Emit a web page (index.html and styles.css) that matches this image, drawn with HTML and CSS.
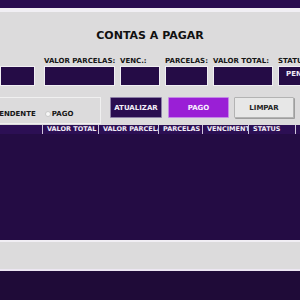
FILE: index.html
```html
<!DOCTYPE html>
<html lang="pt-BR">
<head>
<meta charset="utf-8">
<title>Contas a Pagar</title>
<link rel="stylesheet" href="styles.css">
</head>
<body>
<div class="topbar"></div>
<section class="panel">
  <h1 class="title">CONTAS A PAGAR</h1>
  <div class="form-row">
    <div class="field f1"><span class="label">&nbsp;</span><div class="input"></div></div>
    <div class="field f2"><span class="label">VALOR PARCELAS:</span><div class="input"></div></div>
    <div class="field f3"><span class="label">VENC.:</span><div class="input"></div></div>
    <div class="field f4"><span class="label">PARCELAS:</span><div class="input"></div></div>
    <div class="field f5"><span class="label">VALOR TOTAL:</span><div class="input"></div></div>
    <div class="field f6"><span class="label">STATUS:</span><div class="input select">PENDENTE</div></div>
  </div>
  <div class="action-row">
    <div class="radio-group">
      <span class="radio checked"></span><span class="radio-label">PENDENTE</span>
      <span class="radio"></span><span class="radio-label">PAGO</span>
    </div>
    <button class="btn btn-dark">ATUALIZAR</button>
    <button class="btn btn-violet">PAGO</button>
    <button class="btn btn-light">LIMPAR</button>
  </div>
</section>
<section class="table">
  <div class="thead">
    <div class="th"></div>
    <div class="th">VALOR TOTAL</div>
    <div class="th">VALOR PARCELA</div>
    <div class="th">PARCELAS</div>
    <div class="th">VENCIMENTO</div>
    <div class="th">STATUS</div>
    <div class="th">MES</div>
  </div>
  <div class="tbody"></div>
</section>
<footer class="footer">
  <div class="footer-bar"></div>
  <div class="footer-dark"></div>
</footer>
</body>
</html>
```
FILE: styles.css
```css
html, body {
  margin: 0;
  padding: 0;
}
body {
  width: 300px;
  height: 300px;
  overflow: hidden;
  display: flex;
  flex-direction: column;
  background: #240c44;
  font-family: "DejaVu Sans", "Liberation Sans", sans-serif;
  font-weight: bold;
}
.topbar {
  height: 8px;
  flex-shrink: 0;
  background: #2a0c4f;
}
.panel {
  flex-shrink: 0;
  height: 113px;
  background: #dcdbdc;
  border-top: 4px solid #f1eff4;
  overflow: hidden;
}
.title {
  margin: 0;
  padding-top: 17px;
  font-size: 11px;
  line-height: 13px;
  text-align: center;
  color: #111;
}
.form-row {
  display: flex;
  gap: 5px;
  margin-top: 15px;
}
.field {
  flex-shrink: 0;
  display: flex;
  flex-direction: column;
}
.f1 { width: 35px; margin-right: 4px; }
.f2 { width: 71px; }
.f3 { width: 40px; }
.f4 { width: 43px; }
.f5 { width: 60px; }
.f6 { width: 60px; }
.label {
  font-size: 7px;
  line-height: 8px;
  color: #151515;
  white-space: nowrap;
  margin-bottom: 1px;
}
.input {
  box-sizing: border-box;
  height: 20px;
  background: #250c46;
  border: 1px solid #f0eef2;
}
.select {
  color: #f2eef8;
  font-size: 7px;
  line-height: 14px;
  padding-left: 7px;
  white-space: nowrap;
  overflow: hidden;
}
.action-row {
  display: flex;
  align-items: flex-start;
  margin-top: 11px;
}
.radio-group {
  box-sizing: border-box;
  flex-shrink: 0;
  width: 131px;
  height: 27px;
  margin-left: -30px;
  margin-right: 9px;
  border: 1px solid #f0f0f0;
  display: flex;
  align-items: center;
  padding: 6px 0 0 14px;
  font-size: 7px;
  color: #151515;
}
.radio {
  flex-shrink: 0;
  width: 4px;
  height: 4px;
  border-radius: 50%;
  background: #f7f7f7;
  border: 1px solid #c9c9c9;
  margin: 0 1px 0 2px;
}
.radio.checked {
  visibility: hidden;
}
.radio-label {
  margin-right: 7px;
  white-space: nowrap;
}
.btn {
  flex-shrink: 0;
  box-sizing: border-box;
  height: 21px;
  margin: 0;
  padding: 0;
  font-family: "DejaVu Sans", "Liberation Sans", sans-serif;
  font-weight: bold;
  font-size: 7px;
  border-radius: 1px;
}
.btn-dark {
  width: 52px;
  margin-right: 6px;
  background: #2a0d50;
  color: #f4f0fa;
  border: 1px solid #8d7fa6;
}
.btn-violet {
  width: 61px;
  margin-right: 5px;
  background: #9a1fd6;
  color: #f8f0ff;
  border: 1px solid #c487e6;
}
.btn-light {
  width: 60px;
  background: #e7e7e7;
  color: #222;
  border: 1px solid #b3b3b3;
  box-shadow: 1px 1px 0 #9e9e9e;
}
.table {
  flex: 1;
  display: flex;
  flex-direction: column;
  min-height: 0;
}
.thead {
  display: grid;
  grid-template-columns: 42px 56px 60px 44px 46px 47px 1fr;
  height: 9px;
  background: #2c0f54;
  flex-shrink: 0;
}
.th {
  font-size: 6.5px;
  line-height: 9px;
  color: #f1ecf7;
  padding-left: 4px;
  white-space: nowrap;
  overflow: hidden;
  border-left: 1px solid #cfc6dc;
}
.th:first-child {
  border-left: none;
}
.tbody {
  flex: 1;
  background: #240c44;
}
.footer {
  flex-shrink: 0;
  display: flex;
  flex-direction: column;
}
.footer-bar {
  height: 27px;
  background: #dcdbdc;
  border-top: 2px solid #f1eef4;
  border-bottom: 2px solid #ece6f2;
}
.footer-dark {
  height: 29px;
  background: #1f0b38;
}
```
